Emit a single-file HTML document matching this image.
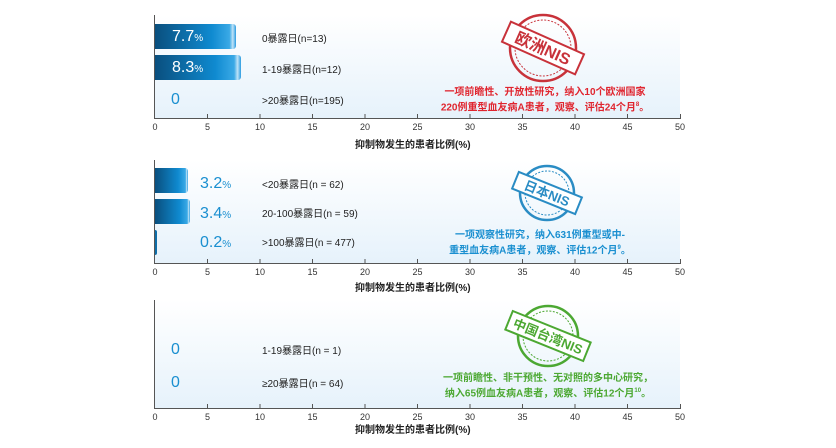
<!DOCTYPE html>
<html><head><meta charset="utf-8"><style>
body{margin:0;width:836px;height:448px;background:#fff;position:relative;overflow:hidden;font-family:"Liberation Sans","Noto Sans CJK SC",sans-serif;}
.abs{position:absolute;}
.area{position:absolute;left:155px;width:525px;background:linear-gradient(#fff,#e6f2fb);}
.yax{position:absolute;left:154px;width:1px;background:#555;}
.xax{position:absolute;left:154px;width:527px;height:1px;background:#555;}
.title{position:absolute;left:355px;font-size:10px;color:#222;font-weight:bold;}
.bar{position:absolute;left:155px;height:25px;background:linear-gradient(90deg,#0a4f7e,#0f8ad0 70%,#3aa9e6 92%,#bfe3f7 96%,#2a9be0);border-radius:0 3px 3px 0;}
.bv{position:absolute;color:#fff;font-size:16px;}
.bv small,.vv small{font-size:10px;}
.vv{position:absolute;color:#1a8fd0;font-size:16px;}
.lab{position:absolute;left:262px;font-size:10px;color:#222;}
.note{position:absolute;font-size:10px;line-height:13px;text-align:center;font-weight:bold;}
</style></head><body>

<!-- chart 1 -->
<div class="area" style="top:15px;height:103px"></div>
<div class="yax" style="top:15px;height:104px"></div>
<div class="xax" style="top:118px"></div>
<div class="bar" style="top:24px;width:81px"></div>
<div class="bar" style="top:55px;width:86px"></div>
<div class="bv" style="left:172px;top:28px">7.7<small>%</small></div>
<div class="bv" style="left:172px;top:59px">8.3<small>%</small></div>
<div class="vv" style="left:171px;top:91px">0</div>
<div class="lab" style="top:30px">0暴露日(n=13)</div>
<div class="lab" style="top:61px">1-19暴露日(n=12)</div>
<div class="lab" style="top:92px">&gt;20暴露日(n=195)</div>
<div class="note" style="left:430px;top:86px;width:230px;color:#e0252f">一项前瞻性、开放性研究，纳入10个欧洲国家<br>220例重型血友病A患者，观察、评估24个月<sup style="font-size:6px">8</sup>。</div>

<!-- chart 2 -->
<div class="area" style="top:160px;height:103px"></div>
<div class="yax" style="top:160px;height:104px"></div>
<div class="xax" style="top:263px"></div>
<div class="bar" style="top:168px;width:33px"></div>
<div class="bar" style="top:199px;width:35px"></div>
<div class="bar" style="top:230px;width:2px;background:#0f6ea8"></div>
<div class="vv" style="left:200px;top:175px">3.2<small>%</small></div>
<div class="vv" style="left:200px;top:205px">3.4<small>%</small></div>
<div class="vv" style="left:200px;top:234px">0.2<small>%</small></div>
<div class="lab" style="top:176px">&lt;20暴露日(n = 62)</div>
<div class="lab" style="top:205px">20-100暴露日(n = 59)</div>
<div class="lab" style="top:234px">&gt;100暴露日(n = 477)</div>
<div class="note" style="left:430px;top:229px;width:220px;color:#1a8fd0">一项观察性研究，纳入631例重型或中-<br>重型血友病A患者，观察、评估12个月<sup style="font-size:6px">9</sup>。</div>

<!-- chart 3 -->
<div class="area" style="top:300px;height:108px"></div>
<div class="yax" style="top:300px;height:109px"></div>
<div class="xax" style="top:408px"></div>
<div class="vv" style="left:171px;top:341px">0</div>
<div class="vv" style="left:171px;top:374px">0</div>
<div class="lab" style="top:342px">1-19暴露日(n = 1)</div>
<div class="lab" style="top:375px">≥20暴露日(n = 64)</div>
<div class="note" style="left:428px;top:372px;width:240px;color:#4ca832">一项前瞻性、非干预性、无对照的多中心研究，<br>纳入65例血友病A患者，观察、评估12个月<sup style="font-size:6px">10</sup>。</div>

<div class="title" style="top:136px">抑制物发生的患者比例(%)</div>
<div class="title" style="top:279px">抑制物发生的患者比例(%)</div>
<div class="title" style="top:421px">抑制物发生的患者比例(%)</div>

<svg class="abs" style="left:0;top:0" width="836" height="448">
<g font-family="Liberation Sans, sans-serif" font-size="9" fill="#333" text-anchor="middle" stroke="none">
<text x="155" y="130">0</text><text x="207.5" y="130">5</text><text x="260" y="130">10</text><text x="312.5" y="130">15</text><text x="365" y="130">20</text><text x="417.5" y="130">25</text><text x="470" y="130">30</text><text x="522.5" y="130">35</text><text x="575" y="130">40</text><text x="627.5" y="130">45</text><text x="680" y="130">50</text>
<text x="155" y="275">0</text><text x="207.5" y="275">5</text><text x="260" y="275">10</text><text x="312.5" y="275">15</text><text x="365" y="275">20</text><text x="417.5" y="275">25</text><text x="470" y="275">30</text><text x="522.5" y="275">35</text><text x="575" y="275">40</text><text x="627.5" y="275">45</text><text x="680" y="275">50</text>
<text x="155" y="420">0</text><text x="207.5" y="420">5</text><text x="260" y="420">10</text><text x="312.5" y="420">15</text><text x="365" y="420">20</text><text x="417.5" y="420">25</text><text x="470" y="420">30</text><text x="522.5" y="420">35</text><text x="575" y="420">40</text><text x="627.5" y="420">45</text><text x="680" y="420">50</text>
</g>
<g stroke="#555" stroke-width="1">
<path d="M207.5 114v4M260 114v4M312.5 114v4M365 114v4M417.5 114v4M470 114v4M522.5 114v4M575 114v4M627.5 114v4M680.5 114v4"/>
<path d="M207.5 259v4M260 259v4M312.5 259v4M365 259v4M417.5 259v4M470 259v4M522.5 259v4M575 259v4M627.5 259v4M680.5 259v4"/>
<path d="M207.5 404v4M260 404v4M312.5 404v4M365 404v4M417.5 404v4M470 404v4M522.5 404v4M575 404v4M627.5 404v4M680.5 404v4"/>
</g>

<g transform="translate(543,48)" stroke="#c8323a" fill="none">
<circle r="33" stroke-width="2.5"/><circle r="28" stroke-width="1" stroke-dasharray="2 1.5"/>
<g transform="rotate(24)"><rect x="-40" y="-11" width="80" height="22" fill="#fff" stroke-width="2"/>
<text x="0" y="6" text-anchor="middle" fill="#c8323a" stroke="none" font-size="16" font-weight="bold" font-family="Liberation Sans, Noto Sans CJK SC, sans-serif">欧洲NIS</text></g>
</g>
<g transform="translate(547,193)" stroke="#2a8cc4" fill="none">
<circle r="27" stroke-width="2.5"/><circle r="22" stroke-width="1" stroke-dasharray="2 1.5"/>
<g transform="rotate(22)"><rect x="-34" y="-9" width="68" height="18" fill="#fff" stroke-width="2"/>
<text x="0" y="5" text-anchor="middle" fill="#2a8cc4" stroke="none" font-size="13" font-weight="bold" font-family="Liberation Sans, Noto Sans CJK SC, sans-serif">日本NIS</text></g>
</g>
<g transform="translate(548,336)" stroke="#4ca832" fill="none">
<circle r="30" stroke-width="2.5"/><circle r="25" stroke-width="1" stroke-dasharray="2 1.5"/>
<g transform="rotate(22)"><rect x="-42" y="-10" width="84" height="20" fill="#fff" stroke-width="2"/>
<text x="0" y="5" text-anchor="middle" fill="#4ca832" stroke="none" font-size="13" font-weight="bold" font-family="Liberation Sans, Noto Sans CJK SC, sans-serif">中国台湾NIS</text></g>
</g>
</svg>
</body></html>
